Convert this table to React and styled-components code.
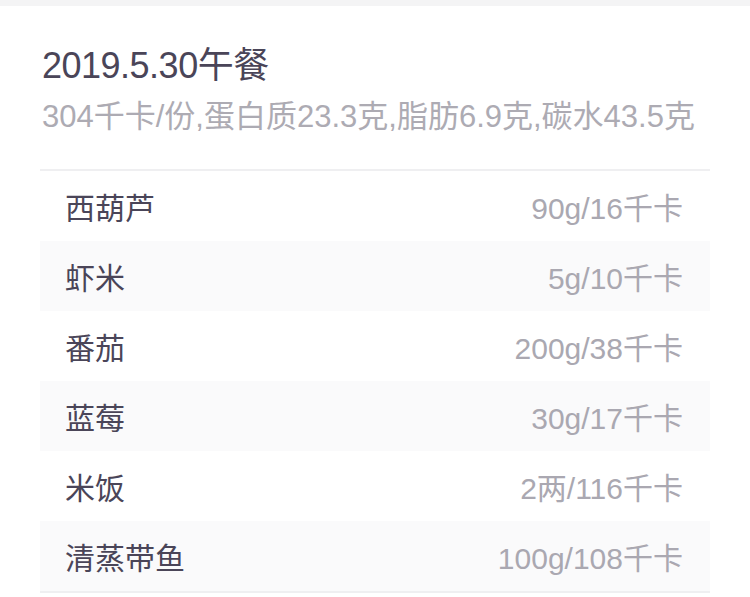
import React from "react";
import styled, { createGlobalStyle } from "styled-components";

const GlobalStyle = createGlobalStyle`
  html, body {
    margin: 0;
    padding: 0;
    background: #ffffff;
  }
  body {
    font-family: "Liberation Sans", "Noto Sans CJK SC", sans-serif;
  }
`;

const Page = styled.div`
  width: 750px;
  min-height: 597px;
  background: #fff;
  border-top: 6px solid #f4f4f5;
  box-sizing: border-box;
`;

const Card = styled.div`
  padding: 0 40px;
`;

const Header = styled.div`
  padding: 34px 2px 32px;
  border-bottom: 2px solid #efeff1;
`;

const Title = styled.div`
  font-size: 36px;
  line-height: 52px;
  color: #4a4558;
  letter-spacing: -0.5px;
`;

const Summary = styled.div`
  margin-top: 5px;
  font-size: 31px;
  line-height: 40px;
  color: #adabb3;
  white-space: nowrap;
`;

const List = styled.div`
  display: flex;
  flex-direction: column;
  border-bottom: 2px solid #efeff1;
`;

const Row = styled.div`
  display: flex;
  align-items: center;
  justify-content: space-between;
  height: 70px;
  padding: 0 27px 0 25px;
  background: ${(p) => (p.$shaded ? "#fafafb" : "#ffffff")};
  font-size: 30px;
`;

const Name = styled.span`
  color: #4a4558;
`;

const Amount = styled.span`
  color: #aaa8b1;
`;

const foods = [
  { name: "西葫芦", amount: "90g/16千卡" },
  { name: "虾米", amount: "5g/10千卡" },
  { name: "番茄", amount: "200g/38千卡" },
  { name: "蓝莓", amount: "30g/17千卡" },
  { name: "米饭", amount: "2两/116千卡" },
  { name: "清蒸带鱼", amount: "100g/108千卡" },
];

export default function App() {
  return (
    <Page>
      <GlobalStyle />
      <Card>
        <Header>
          <Title>2019.5.30午餐</Title>
          <Summary>304千卡/份,蛋白质23.3克,脂肪6.9克,碳水43.5克</Summary>
        </Header>
        <List>
          {foods.map((f, i) => (
            <Row key={f.name} $shaded={i % 2 === 1}>
              <Name>{f.name}</Name>
              <Amount>{f.amount}</Amount>
            </Row>
          ))}
        </List>
      </Card>
    </Page>
  );
}
